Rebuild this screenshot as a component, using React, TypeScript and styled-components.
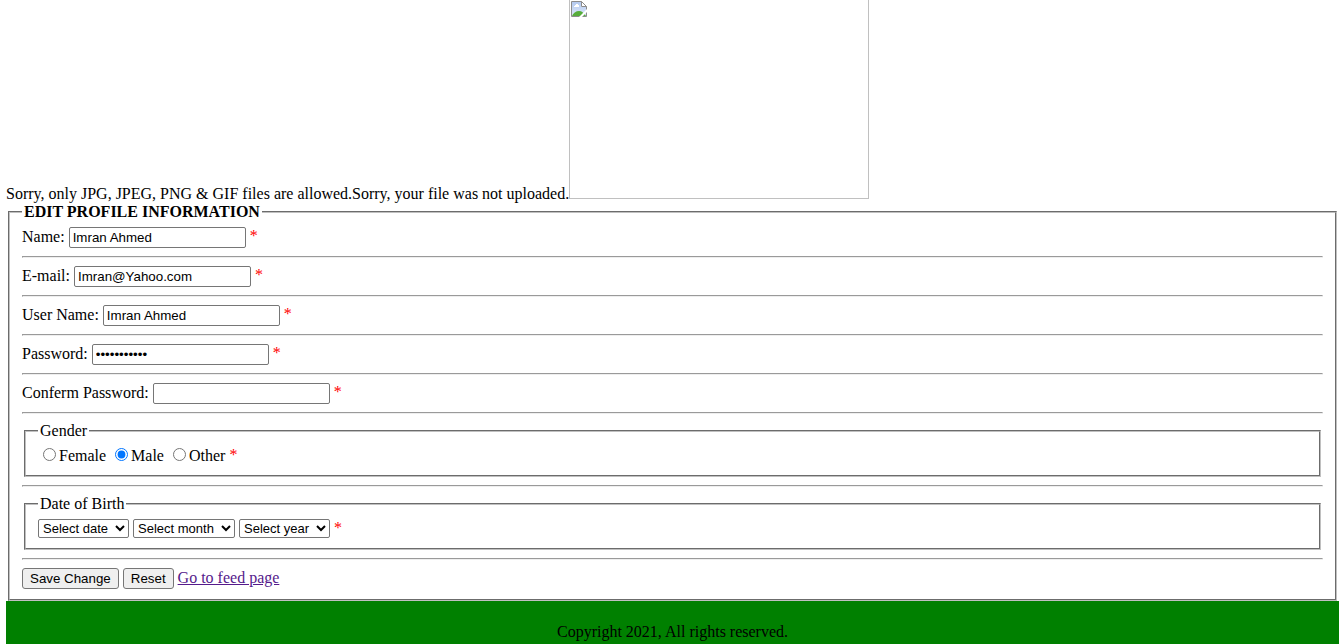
import React from 'react';
import styled, { createGlobalStyle } from 'styled-components';

const GlobalStyle = createGlobalStyle`
  body {
    margin: 0 4px 0 6px;
    background: #fff;
    color: #000;
    font: 16px/18px "Liberation Serif", "Times New Roman", serif;
  }
`;

const Notice = styled.div`
  display: flex;
  align-items: flex-end;
  padding-bottom: 4px;
`;

const Message = styled.span`
  margin-bottom: -4px;
`;

const MissingPicture = styled.div`
  box-sizing: border-box;
  width: 300px;
  height: 199px;
  padding: 1px;
  border: 1px solid #c0c0c0;
  border-top: 0;
  line-height: 0;
`;

const Panel = styled.fieldset`
  min-width: 0;
  margin: 0 2px;
  padding: 6px 12px 10px;
  border: 2px groove #c0c0c0;
`;

const Legend = styled.legend`
  padding: 0 2px;
`;

const Row = styled.div<{ $height?: number }>`
  display: flex;
  align-items: center;
  gap: 4px;
  height: ${({ $height = 21 }) => $height}px;
`;

const Rule = styled.hr`
  margin: 8px 0;
  border: 1px inset #eee;
`;

const FieldLabel = styled.label`
  padding-bottom: 1px;
`;

const TextInput = styled.input`
  box-sizing: border-box;
  width: 177px;
  height: 21px;
  padding: 1px 3px;
  border: 1px solid #767676;
  border-radius: 2px;
  background: #fff;
  color: #000;
  font-family: "Liberation Sans", Arial, sans-serif;
`;

const Choice = styled.label`
  display: flex;
  align-items: center;
`;

const Radio = styled.input`
  width: 13px;
  height: 13px;
  margin: 0 3px 2px 5px;
`;

const Select = styled.select<{ $wide?: boolean }>`
  box-sizing: border-box;
  width: ${({ $wide }) => ($wide ? 102 : 91)}px;
  height: 19px;
  border: 1px solid #767676;
  border-radius: 2px;
  background: #fff;
  color: #000;
  font: 13px "Liberation Sans", Arial, sans-serif;
`;

const Button = styled.button`
  height: 21px;
  padding: 1px 7px;
  border: 1px solid #767676;
  border-radius: 3px;
  background: #efefef;
  color: #000;
  font-family: "Liberation Sans", Arial, sans-serif;
`;

const FeedLink = styled.a`
  padding-bottom: 1px;
  color: #551a8b;
  text-decoration: underline;
`;

const Star = styled.span`
  align-self: flex-start;
  color: #f00;
`;

const Footer = styled.footer`
  padding: 22px 0 3px;
  background: #008000;
  text-align: center;
`;

const fields = [
  { id: 'name', label: 'Name:', type: 'text', value: 'Imran Ahmed' },
  { id: 'email', label: 'E-mail:', type: 'text', value: 'Imran@Yahoo.com' },
  { id: 'username', label: 'User Name:', type: 'text', value: 'Imran Ahmed' },
  { id: 'password', label: 'Password:', type: 'password', value: 'password123' },
  { id: 'confirm', label: 'Conferm Password:', type: 'password', value: '' },
];

const genders = ['Female', 'Male', 'Other'];
const months = ['January', 'February', 'March', 'April', 'May', 'June', 'July', 'August', 'September', 'October', 'November', 'December'];
const range = (from: number, to: number) => Array.from({ length: to - from + 1 }, (_, i) => String(from + i));

const dateParts = [
  { name: 'date', options: range(1, 31) },
  { name: 'month', options: months, wide: true },
  { name: 'year', options: range(1980, 2021) },
];

function BrokenImageIcon() {
  return (
    <svg width="16" height="16" viewBox="0 0 16 16" aria-hidden="true">
      <defs>
        <linearGradient id="sky" x1="0" y1="0" x2="0" y2="1">
          <stop offset="0" stopColor="#b4caf0" />
          <stop offset="1" stopColor="#dce7fa" />
        </linearGradient>
      </defs>
      <path d="M.5.5h10l5 5v10H.5z" fill="#fff" stroke="#8c8c8c" />
      <path d="M1 1h9v5h5v9H1z" fill="url(#sky)" />
      <path d="M3 6V5h1V4h1V3h2v1h1v2z" fill="#fff" />
      <path d="M1 15c1-3 4-5 7-5s5 2 7 5z" fill="#57ad3b" />
      <path d="M10.500.5v5h5z" fill="#fff" stroke="#8c8c8c" />
      <path d="M16 8v3l-5 5H8z" fill="#fff" />
    </svg>
  );
}

export default function App() {
  return (
    <>
      <GlobalStyle />
      <Notice>
        <Message>Sorry, only JPG, JPEG, PNG &amp; GIF files are allowed.Sorry, your file was not uploaded.</Message>
        <MissingPicture role="img" aria-label="Profile picture">
          <BrokenImageIcon />
        </MissingPicture>
      </Notice>
      <form onSubmit={(event) => event.preventDefault()}>
        <Panel>
          <Legend><b>EDIT PROFILE INFORMATION</b></Legend>
          {fields.map((field) => (
            <React.Fragment key={field.id}>
              <Row>
                <FieldLabel htmlFor={field.id}>{field.label}</FieldLabel>
                <TextInput id={field.id} type={field.type} defaultValue={field.value} />
                <Star>*</Star>
              </Row>
              <Rule />
            </React.Fragment>
          ))}
          <Panel>
            <Legend>Gender</Legend>
            <Row $height={19}>
              {genders.map((gender) => (
                <Choice key={gender}>
                  <Radio type="radio" name="gender" value={gender} defaultChecked={gender === 'Male'} />
                  {gender}
                </Choice>
              ))}
              <Star>*</Star>
            </Row>
          </Panel>
          <Rule />
          <Panel>
            <Legend>Date of Birth</Legend>
            <Row $height={19}>
              {dateParts.map((part) => (
                <Select key={part.name} $wide={part.wide} aria-label={`Birth ${part.name}`} defaultValue="">
                  <option value="">Select {part.name}</option>
                  {part.options.map((option) => <option key={option}>{option}</option>)}
                </Select>
              ))}
              <Star>*</Star>
            </Row>
          </Panel>
          <Rule />
          <Row>
            <Button type="submit">Save Change</Button>
            <Button type="reset">Reset</Button>
            <FeedLink href="#feed">Go to feed page</FeedLink>
          </Row>
        </Panel>
      </form>
      <Footer>Copyright 2021, All rights reserved.</Footer>
    </>
  );
}
